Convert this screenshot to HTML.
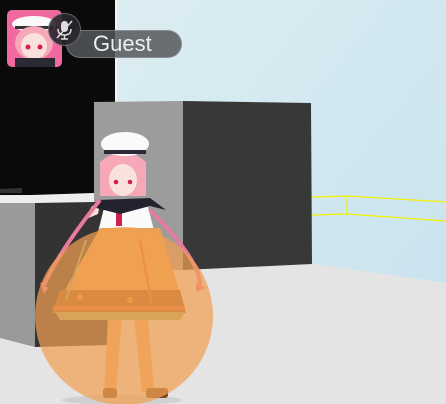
<!DOCTYPE html>
<html><head><style>
html,body{margin:0;padding:0;width:446px;height:404px;overflow:hidden;background:#d3e9f0;font-family:"Liberation Sans",sans-serif}
svg{position:absolute;left:0;top:0}
.pill{position:absolute;left:66px;top:30px;width:116px;height:28px;border-radius:14px;background:rgba(85,88,92,.85);border:1px solid rgba(200,200,200,.35);box-sizing:border-box}
.pill span{position:absolute;left:26px;top:0px;color:#eee;font-size:22px}
.mic{position:absolute;left:48px;top:13px;width:33px;height:33px;border-radius:50%;background:rgba(40,40,44,.9);border:1px solid rgba(200,200,200,.4);box-sizing:border-box}
.av{position:absolute;left:7px;top:10px;width:55px;height:57px;border-radius:5px;background:#f06aa0;overflow:hidden}
</style></head><body>
<svg width="446" height="404" viewBox="0 0 446 404">
<defs><linearGradient id="sky" x1="0" y1="0" x2="1" y2="1"><stop offset="0" stop-color="#dcedf2"/><stop offset="1" stop-color="#c6e2ee"/></linearGradient></defs>
<rect x="117" y="0" width="329" height="404" fill="url(#sky)"/>
<rect x="0" y="0" width="115" height="195" fill="#0a0a0a"/>
<rect x="115" y="0" width="2" height="102" fill="#f4f4f4"/>
<polygon points="0,195 300,262 446,283 446,404 0,404" fill="#e4e4e4"/>
<polygon points="290,262 446,283 446,290 300,268" fill="#e4e4e4"/>
<polygon points="94,102 183,101 183,270 94,270" fill="#9c9c9c"/>
<polygon points="183,101 311,103 312,264 183,270" fill="#383838"/>
<polygon points="0,189 22,188 22,193 0,193" fill="#333"/>
<polygon points="0,196 94,193 94,203 0,203" fill="#eeeeee"/>
<polygon points="0,203 35,203 35,347 0,338" fill="#9a9a9a"/>
<polygon points="35,203 94,202 110,202 110,345 35,347" fill="#333"/>
<polyline points="312,197 347,196 446,202" fill="none" stroke="#f3f000" stroke-width="1.2"/>
<polyline points="312,215 347,214 446,221" fill="none" stroke="#f3f000" stroke-width="1.2"/>
<line x1="347" y1="196" x2="347" y2="214" stroke="#f3f000" stroke-width="1.2"/>
<ellipse cx="122" cy="400" rx="60" ry="5" fill="#bbb" opacity=".5"/>
<path d="M108,318 L104,392 L116,392 L122,318 Z M134,318 L142,392 L154,392 L148,318Z" fill="#f0b070"/>
<rect x="103" y="388" width="14" height="10" rx="3" fill="#7a4a20"/>
<rect x="146" y="388" width="22" height="10" rx="3" fill="#7a4a20"/>
<path d="M106,200 L146,200 L154,230 L98,232Z" fill="#fafafa"/>
<rect x="116" y="212" width="6" height="14" fill="#d02050"/>
<path d="M92,206 L100,204 L98,214 L84,220Z" fill="#f7e0d8"/>
<path d="M98,200 L150,198 L166,210 L150,206 L120,214 L96,208Z" fill="#232330"/>
<path d="M100,162 Q123,142 146,162 L146,196 L100,196Z" fill="#f4a8b8"/>
<ellipse cx="123" cy="180" rx="14" ry="16" fill="#fbe1dc"/>
<circle cx="116" cy="182" r="2.3" fill="#d02050"/><circle cx="130" cy="182" r="2.3" fill="#d02050"/>
<ellipse cx="125" cy="144" rx="24" ry="12" fill="#fafafa"/>
<rect x="104" y="150" width="42" height="4" fill="#2a2a34"/>
<path d="M100,228 L160,228 L186,313 L52,313Z" fill="#eba055"/>
<path d="M60,290 L180,290 L186,313 L52,313Z" fill="#a0581c"/>
<line x1="86" y1="240" x2="66" y2="300" stroke="#80b070" stroke-width="2"/>
<line x1="140" y1="240" x2="152" y2="305" stroke="#e8603e" stroke-width="2.5"/>
<circle cx="80" cy="297" r="3" fill="#e8902e"/><circle cx="130" cy="300" r="3" fill="#e8902e"/>
<rect x="53" y="306" width="132" height="4" fill="#e8603e"/>
<path d="M55,312 L185,312 L180,320 L60,320Z" fill="#9cb070"/>
<path d="M100,200 Q60,250 44,285 M150,210 Q200,260 200,285" fill="none" stroke="#e87aa0" stroke-width="4"/>
<path d="M40,282 L48,288 L44,294Z M196,282 L206,288 L196,292Z" fill="#f070a0"/>
<circle cx="124" cy="316" r="89" fill="#f0a050" opacity=".72"/>
</svg>
<div class="av">
<svg width="55" height="57" viewBox="0 0 55 57"><ellipse cx="27" cy="14" rx="22" ry="8" fill="#fafafa"/><rect x="8" y="16" width="38" height="3" fill="#333"/><ellipse cx="27" cy="33" rx="19" ry="17" fill="#f4a8b8"/><ellipse cx="27" cy="36" rx="13" ry="13" fill="#fbe1dc"/><rect x="8" y="48" width="40" height="9" fill="#2a2a34"/><circle cx="21" cy="37" r="2.5" fill="#d02050"/><circle cx="33" cy="37" r="2.5" fill="#d02050"/></svg>
</div>
<div class="pill"><span>Guest</span></div>
<div class="mic"><svg width="31" height="31" viewBox="0 0 31 31"><rect x="12" y="7" width="7" height="11" rx="3.5" fill="#ddd"/><path d="M9,15 Q9,21 15.5,21 Q22,21 22,15 M15.5,21 V25 M12,25 H19" fill="none" stroke="#ddd" stroke-width="1.5"/><line x1="8" y1="24" x2="23" y2="7" stroke="#ddd" stroke-width="1.5"/></svg></div>
</body></html>
